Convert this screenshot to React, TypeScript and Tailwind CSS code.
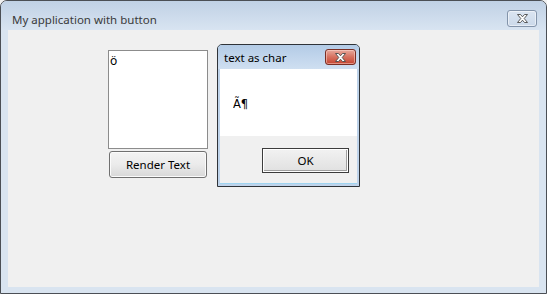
import React from "react";

const font = { fontFamily: '"Noto Sans", "Open Sans", "Liberation Sans", sans-serif' };

function XGlyph({ w = 13, h = 9 }: { w?: number; h?: number }) {
  return (
    <svg width={w} height={h} viewBox="0 0 13 9">
      <path
        d="M1.5 0.5 H4.5 L6.5 2.8 L8.5 0.5 H11.5 L8.2 4.5 L11.5 8.5 H8.5 L6.5 6.2 L4.5 8.5 H1.5 L4.8 4.5 Z"
        fill="#ffffff"
        stroke="#4a4a4a"
        strokeWidth="0.9"
        strokeLinejoin="round"
      />
    </svg>
  );
}

export default function App() {
  return (
    <div className="w-[547px] h-[294px] bg-[#f0f0f0] overflow-hidden antialiased" style={font}>
      <div className="w-[547px] h-[294px] flex flex-col border border-[#4b4f55] rounded-t-[7px] bg-[#d9e4f0] overflow-hidden">
        {/* title bar */}
        <div className="h-[29px] flex items-start justify-between bg-gradient-to-b from-[#c0d1e5] to-[#d8e4f1] pl-[11px] pr-[9px]">
          <span className="mt-[11px] text-[11.5px] leading-[16px] text-[#3a3a3a]">My application with button</span>
          <div className="mt-[9px] w-[30px] h-[17px] rounded-[3px] border border-[#8394aa] bg-gradient-to-b from-[#dbe5f1] to-[#cbd9ea] flex items-center justify-center shadow-[inset_0_0_0_1px_rgba(255,255,255,0.5)]">
            <XGlyph />
          </div>
        </div>
        {/* client area */}
        <div className="flex-1 mx-[7px] mb-[6px] bg-[#f0f0f0] flex items-start pl-[100px] pt-[14px]">
          <div className="flex flex-col mt-[6px]">
            <div className="w-[100px] h-[99px] bg-white border border-[#8c8c8c] px-[1px] pt-[3px] text-[12px] leading-[14px] text-black">
              ö
            </div>
            <button className="mt-[2px] ml-[1px] w-[98px] h-[27px] rounded-[3px] border border-[#707070] bg-gradient-to-b from-[#f3f3f3] via-[#ebebeb] to-[#d8d8d8] text-[11.5px] text-black shadow-[inset_0_0_0_1px_#fbfbfb]">
              Render Text
            </button>
          </div>
          {/* dialog */}
          <div className="ml-[9px] w-[143px] h-[143px] flex flex-col border border-[#2f3338] rounded-t-[5px] bg-[#bed3ea] overflow-hidden">
            <div className="h-[24px] flex items-start justify-between bg-gradient-to-b from-[#b3cbe6] to-[#cfdff1] pl-[6px] pr-[3px]">
              <span className="mt-[5px] text-[11.5px] leading-[15px] text-black">text as char</span>
              <div className="mt-[4px] w-[31px] h-[16px] rounded-[3px] border border-[#7a2e24] bg-gradient-to-b from-[#e7a99d] via-[#d6705f] to-[#c4432f] flex items-center justify-center shadow-[inset_0_0_0_1px_rgba(255,220,210,0.5)]">
                <XGlyph />
              </div>
            </div>
            <div className="flex-1 mx-[2px] mb-[2px] flex flex-col border-b border-[#9fd4f0]">
              <div className="h-[67px] bg-white pl-[13px] pt-[28px] text-[12px] leading-[14px] text-black">
                <span
                  className="inline-block opacity-[0.99]"
                  style={{ fontFamily: '"DejaVu Sans", "Liberation Sans", sans-serif', fontSize: "11.5px" }}
                >
                  Ã¶
                </span>
              </div>
              <div className="flex-1 bg-[#f0f0f0] flex justify-end items-start pr-[8px] pt-[12px]">
                <button className="w-[87px] h-[25px] border border-[#3c3c3c] bg-gradient-to-b from-[#f2f2f2] to-[#e0e0e0] shadow-[inset_0_0_0_1px_#ffffff,inset_-1px_-1px_0_1px_#a0a0a0] text-[11.5px] text-black">
                  OK
                </button>
              </div>
            </div>
          </div>
        </div>
      </div>
    </div>
  );
}
